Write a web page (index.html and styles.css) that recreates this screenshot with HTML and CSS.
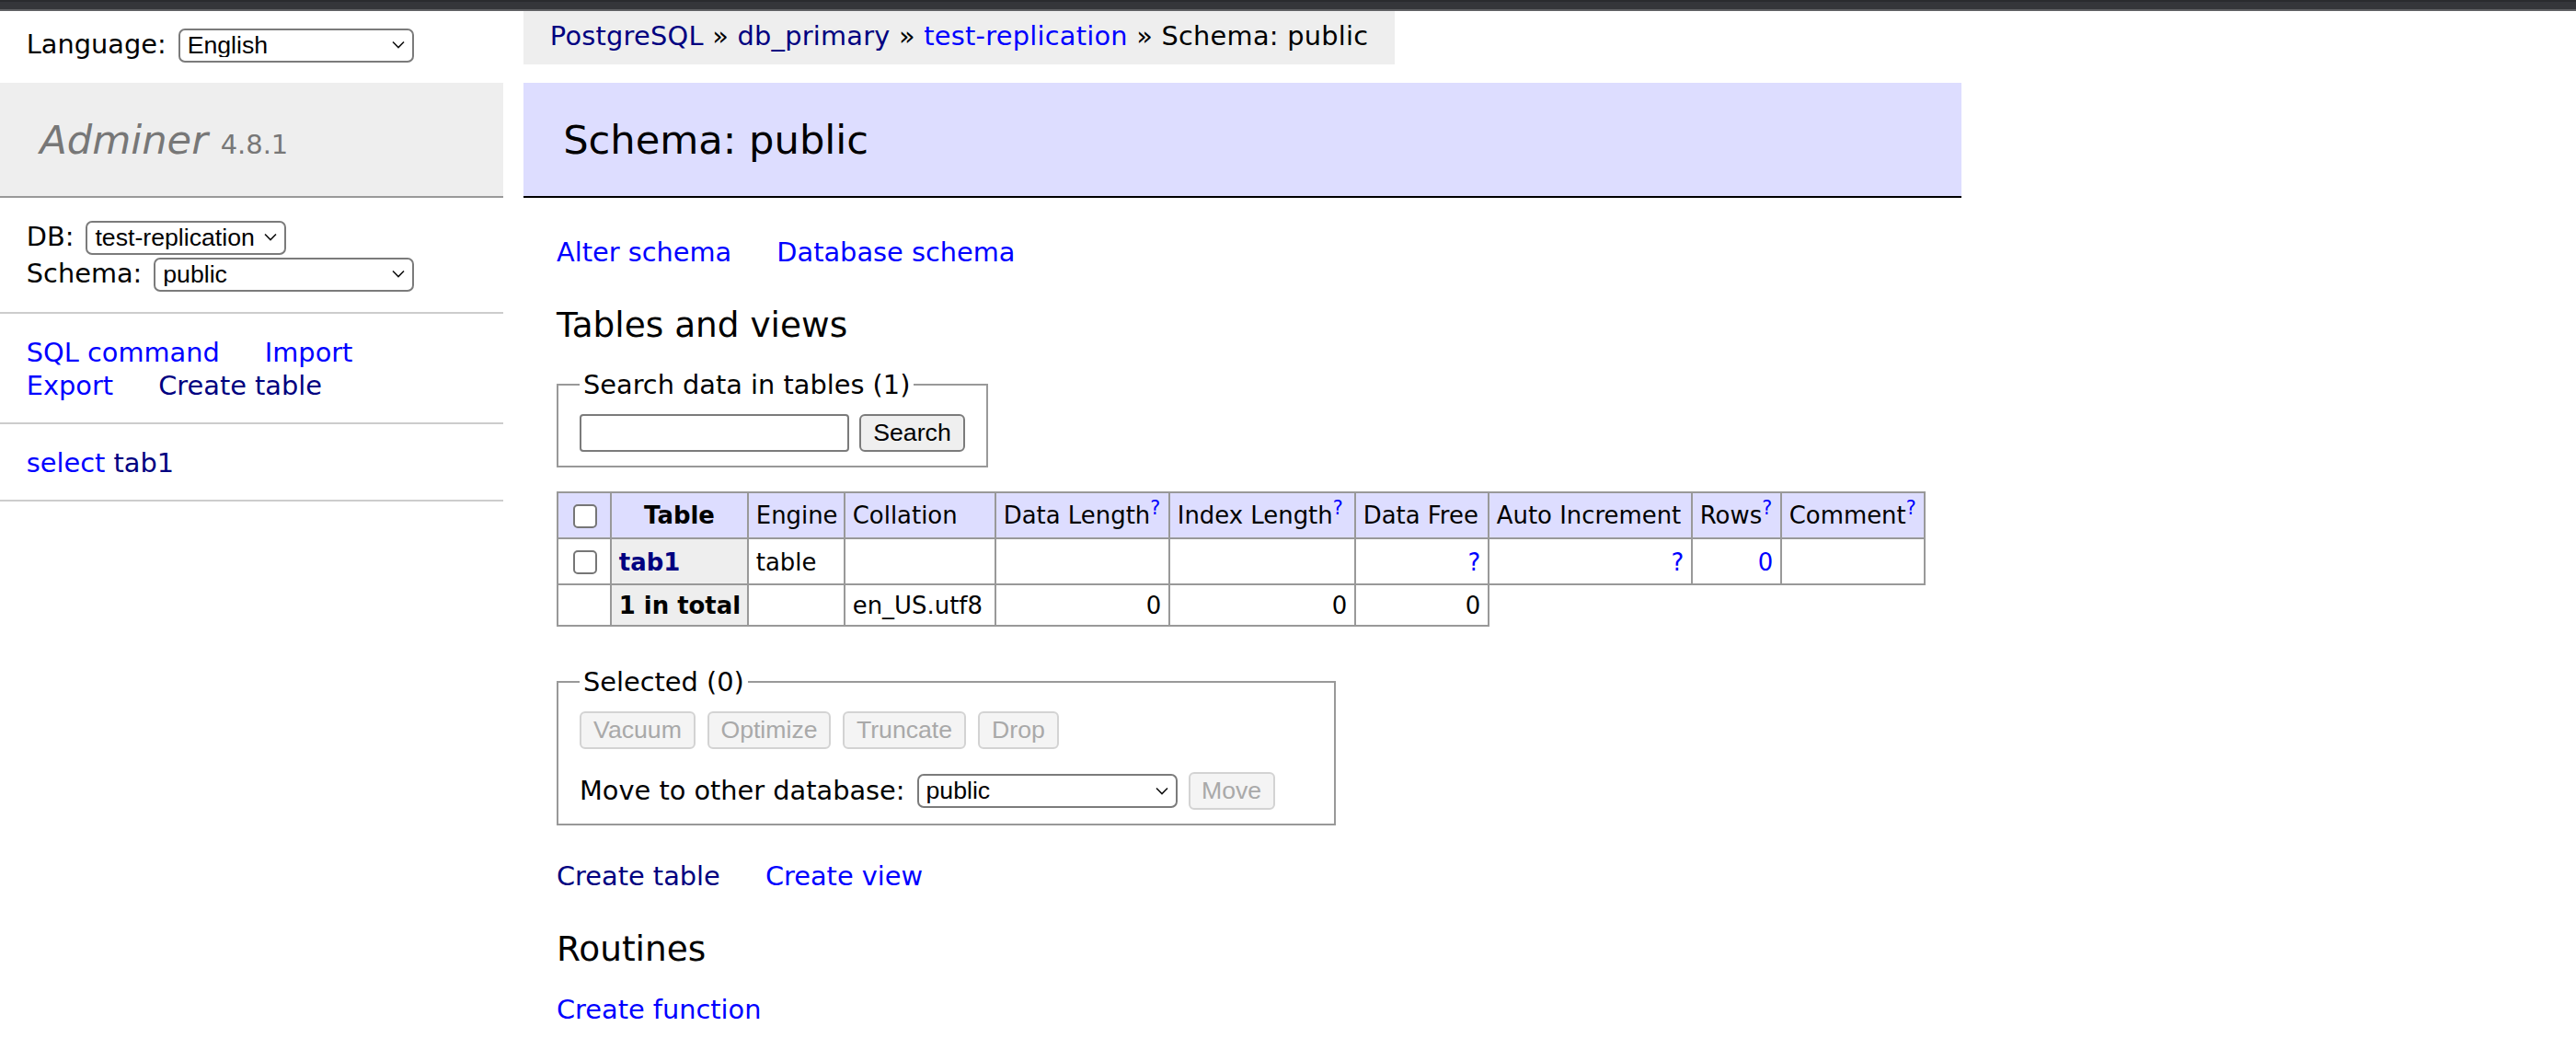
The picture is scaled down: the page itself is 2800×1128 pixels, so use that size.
FILE: index.html
```html
<!DOCTYPE html>
<html lang="en">
<head>
<meta charset="utf-8">
<title>Schema: public - test-replication - Adminer</title>
<link rel="stylesheet" href="styles.css">
</head>
<body>
<div class="chrome"></div>
<div class="page">
  <aside class="menu">
    <form class="lang">
      <span class="lang-label">Language:</span>
      <span class="sel sel-lang"><select><option>English</option></select><svg class="chev" viewBox="0 0 14 9"><path d="M1 1.5 L7 7.5 L13 1.5"/></svg></span>
    </form>
    <h1 class="logo"><a class="logo-link" href="#">Adminer</a> <span class="version">4.8.1</span></h1>
    <div class="dbs">
      <div class="dbrow"><span class="dblabel">DB:</span><span class="sel sel-db"><select><option>test-replication</option></select><svg class="chev" viewBox="0 0 14 9"><path d="M1 1.5 L7 7.5 L13 1.5"/></svg></span></div>
      <div class="dbrow"><span class="dblabel">Schema:</span><span class="sel sel-ns"><select><option>public</option></select><svg class="chev" viewBox="0 0 14 9"><path d="M1 1.5 L7 7.5 L13 1.5"/></svg></span></div>
    </div>
    <p class="menu-links"><a href="#">SQL command</a> <a href="#">Import</a> <a href="#">Export</a> <a class="visited" href="#">Create table</a></p>
    <ul class="tables"><li><a href="#">select</a> <a class="visited" href="#">tab1</a></li></ul>
  </aside>
  <main class="content">
    <p class="breadcrumb"><a class="visited" href="#">PostgreSQL</a> » <a class="visited" href="#">db_primary</a> » <a href="#">test-replication</a> » Schema: public</p>
    <h2 class="title">Schema: public</h2>
    <div class="body">
      <p class="links"><a href="#">Alter schema</a> <a href="#">Database schema</a></p>
      <h3 class="section">Tables and views</h3>
      <form class="tables-form">
        <fieldset class="fs fs-search">
          <legend>Search data in tables (1)</legend>
          <div class="search-row"><input class="search-input" type="text"><button class="btn" type="button">Search</button></div>
        </fieldset>
        <table class="grid">
          <colgroup>
            <col class="c1"><col class="c2"><col class="c3"><col class="c4"><col class="c5"><col class="c6"><col class="c7"><col class="c8"><col class="c9"><col class="c10">
          </colgroup>
          <thead>
            <tr>
              <td><input class="cb" type="checkbox"></td>
              <th>Table</th>
              <td>Engine</td>
              <td>Collation</td>
              <td>Data Length<a href="#"><sup>?</sup></a></td>
              <td>Index Length<a href="#"><sup>?</sup></a></td>
              <td>Data Free</td>
              <td>Auto Increment</td>
              <td>Rows<a href="#"><sup>?</sup></a></td>
              <td>Comment<a href="#"><sup>?</sup></a></td>
            </tr>
          </thead>
          <tbody>
            <tr>
              <td><input class="cb" type="checkbox"></td>
              <th><a class="visited" href="#">tab1</a></th>
              <td>table</td>
              <td></td>
              <td class="num"></td>
              <td class="num"></td>
              <td class="num"><a href="#">?</a></td>
              <td class="num"><a href="#">?</a></td>
              <td class="num"><a href="#">0</a></td>
              <td></td>
            </tr>
            <tr>
              <td></td>
              <th>1 in total</th>
              <td></td>
              <td>en_US.utf8</td>
              <td class="num">0</td>
              <td class="num">0</td>
              <td class="num">0</td>
            </tr>
          </tbody>
        </table>
        <div class="footer">
          <fieldset class="fs fs-selected">
            <legend>Selected (0)</legend>
            <div class="btn-row">
              <button class="btn b-vacuum" type="button" disabled>Vacuum</button>
              <button class="btn b-optimize" type="button" disabled>Optimize</button>
              <button class="btn b-truncate" type="button" disabled>Truncate</button>
              <button class="btn b-drop" type="button" disabled>Drop</button>
            </div>
            <p class="move-row"><span class="move-label">Move to other database:</span><span class="sel sel-move"><select><option>public</option></select><svg class="chev" viewBox="0 0 14 9"><path d="M1 1.5 L7 7.5 L13 1.5"/></svg></span><button class="btn b-move" type="button" disabled>Move</button></p>
          </fieldset>
        </div>
      </form>
      <p class="links links-create"><a class="visited" href="#">Create table</a> <a href="#">Create view</a></p>
      <h3 class="section">Routines</h3>
      <p class="links links-fn"><a href="#">Create function</a></p>
    </div>
  </main>
</div>
</body>
</html>
```

FILE: styles.css
```css
html, body {
  margin: 0;
  padding: 0;
  background: #fff;
}
body {
  font: 28.8px/1.25 "DejaVu Sans", Verdana, sans-serif;
  color: #000;
  width: 2800px;
  overflow: hidden;
}
a {
  color: #00f;
  text-decoration: none;
}
a.visited {
  color: #000080;
}
.chrome {
  height: 8px;
  background: #35363a;
  border-top: 2px solid #2a2b2e;
  border-bottom: 2px solid #606164;
}
.page {
  display: flex;
  align-items: flex-start;
}

/* sidebar */
.menu {
  width: 547px;
  flex: none;
}
.lang {
  height: 78px;
  box-sizing: border-box;
  padding: 8.64px 28.8px 0;
  margin: 0;
  display: flex;
  align-items: flex-start;
}
.lang-label {
  line-height: 51.84px;
  padding-top: 2px;
  margin-right: 13px;
}
.sel {
  position: relative;
  display: inline-block;
  flex: none;
}
.sel select {
  -webkit-appearance: none;
  appearance: none;
  display: block;
  box-sizing: border-box;
  width: 100%;
  height: 37px;
  margin: 0;
  padding: 0 26px 0 8px;
  font: 26.67px/1 "Liberation Sans", Arial, sans-serif;
  color: #000;
  background: #fff;
  border: 2px solid #7b7b7b;
  border-radius: 7px;
}
.sel .chev {
  position: absolute;
  right: 10px;
  top: 50%;
  width: 14px;
  height: 9px;
  margin-top: -5px;
  fill: none;
  stroke: #111;
  stroke-width: 1.6;
  pointer-events: none;
}
.sel-lang {
  width: 256px;
  margin-top: 10px;
}
.sel-db {
  width: 218px;
}
.sel-ns {
  width: 283px;
}
.sel-move {
  width: 283px;
}
.logo {
  margin: 0;
  padding: 34.56px 43.2px;
  font-size: 43.2px;
  line-height: 54px;
  font-weight: normal;
  background: #eee;
  color: #777;
  border-bottom: 2px solid #999;
}
.logo-link {
  color: #777;
  font-style: italic;
}
.version {
  font-size: 67%;
  line-height: 1;
  color: #777;
}
.dbs {
  padding: 23px 28.8px 21px;
  border-bottom: 2px solid #ccc;
}
.dbrow {
  display: flex;
  align-items: center;
  height: 40px;
}
.dblabel {
  margin-right: 13px;
}
.menu-links {
  margin: 0;
  padding: 24.5px 28.8px 21.5px;
  border-bottom: 2px solid #ccc;
}
.menu-links a,
.links a {
  margin-right: 40px;
  white-space: nowrap;
}
.tables {
  list-style: none;
  margin: 0;
  padding: 24.5px 28.8px 21.5px;
  border-bottom: 2px solid #ccc;
}

/* content */
.content {
  width: 1563px;
  margin-left: 22px;
  flex: none;
}
.breadcrumb {
  display: inline-block;
  margin: 0;
  height: 57.6px;
  line-height: 51.84px;
  padding: 2px 28.8px 0;
  box-sizing: border-box;
  background: #eee;
  white-space: nowrap;
  letter-spacing: 0.25px;
}
.title {
  margin: 20.4px 0 0;
  padding: 34.56px 43.2px;
  font-size: 43.2px;
  line-height: 54px;
  font-weight: normal;
  background: #ddf;
  border-bottom: 2px solid #000;
}
.body {
  padding-left: 36px;
}
.links {
  margin: 40px 0 0;
  padding-top: 1.5px;
}
.section {
  margin: 37.44px 0 0;
  font-size: 37.44px;
  line-height: 46.8px;
  font-weight: normal;
}
.tables-form {
  margin: 0;
}
.fs {
  display: block;
  width: fit-content;
  margin: 23px 0 0;
  padding: 0 23px 14.4px;
  border: 2px solid #999;
}
.fs legend {
  padding: 0 4px;
  line-height: 36px;
}
.fs-search {
  padding-top: 14.4px;
}
.search-row {
  display: flex;
  align-items: center;
  gap: 11px;
}
.search-input {
  box-sizing: border-box;
  width: 293px;
  height: 41px;
  margin: 0;
  border: 2px solid #7b7b7b;
  border-radius: 4px;
  background: #fff;
  font: 26.67px "Liberation Sans", Arial, sans-serif;
}
.btn {
  box-sizing: border-box;
  height: 41px;
  margin: 0;
  padding: 0 12px;
  font: 26.67px/1 "Liberation Sans", Arial, sans-serif;
  color: #000;
  background: #efefef;
  border: 2px solid #7b7b7b;
  border-radius: 6px;
}
.search-row .btn {
  width: 115px;
}
.btn:disabled {
  color: #a9a9a9;
  background: #f4f4f4;
  border-color: #d3d3d3;
}
.b-vacuum { width: 126px; }
.b-optimize { width: 134px; }
.b-truncate { width: 134px; }
.b-drop { width: 88px; }
.b-move { width: 94px; }

.grid {
  margin-top: 26px;
  border-collapse: collapse;
  table-layout: fixed;
  width: 1486px;
  font-size: 25.92px;
  line-height: 32.4px;
}
.grid col.c1 { width: 58px; }
.grid col.c2 { width: 149px; }
.grid col.c3 { width: 105px; }
.grid col.c4 { width: 164px; }
.grid col.c5 { width: 189px; }
.grid col.c6 { width: 202px; }
.grid col.c7 { width: 145px; }
.grid col.c8 { width: 221px; }
.grid col.c9 { width: 97px; }
.grid col.c10 { width: 156px; }
.grid td,
.grid th {
  border: 2px solid #999;
  padding: 6px 7.78px 4.4px;
  white-space: nowrap;
  overflow: hidden;
  text-align: left;
}
.grid thead td,
.grid thead th {
  background: #ddf;
}
.grid thead th {
  text-align: center;
  padding-left: 12.96px;
  padding-right: 12.96px;
}
.grid tbody th {
  background: #eee;
  font-weight: bold;
}
.grid td.num {
  text-align: right;
}
.grid sup {
  font-size: 0.8em;
  line-height: 0;
}
.cb {
  -webkit-appearance: none;
  appearance: none;
  display: block;
  box-sizing: border-box;
  width: 26px;
  height: 26px;
  margin: 6px 6px 6px 8px;
  border: 2px solid #767676;
  border-radius: 5px;
  background: #fff;
}

.footer {
  padding: 19px 0 14px;
}
.fs-selected {
  padding-top: 14px;
  padding-right: 24.5px;
}
.btn-row {
  display: flex;
  gap: 13px;
}
.move-row {
  display: flex;
  align-items: center;
  height: 41px;
  margin: 25px 40px 0 0;
}
.move-label {
  margin-right: 13px;
}
.move-row .btn {
  margin-left: 12px;
}
.links-create {
  margin-top: 23px;
}
.links-fn {
  margin-top: 23px;
}
```
